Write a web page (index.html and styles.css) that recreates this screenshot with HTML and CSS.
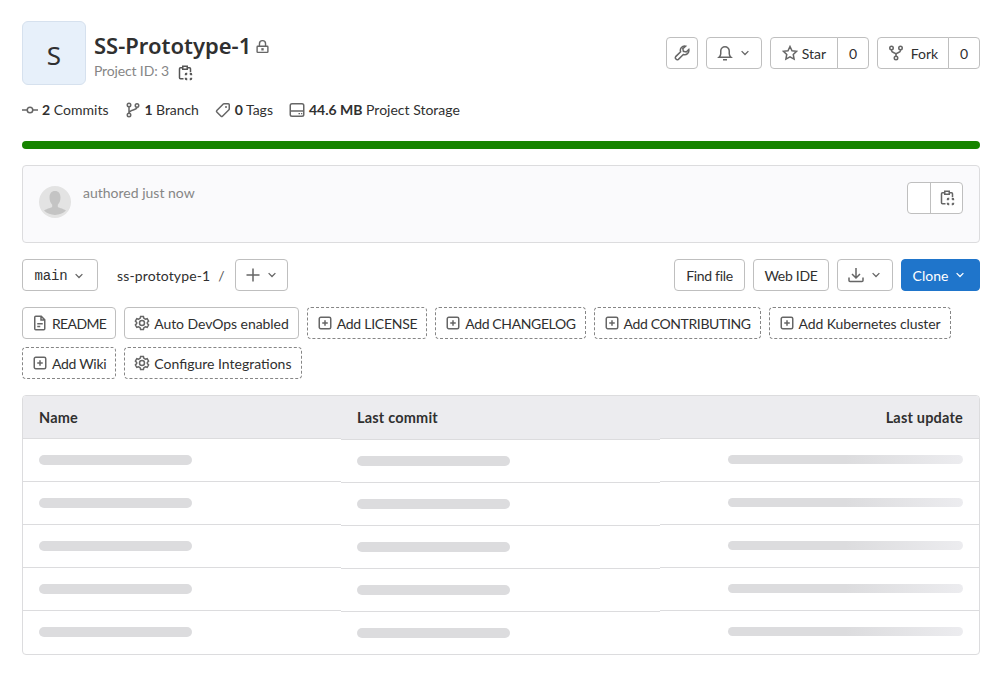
FILE: index.html
```html
<!DOCTYPE html>
<html lang="en">
<head>
<meta charset="utf-8">
<title>SS-Prototype-1</title>
<link rel="stylesheet" href="styles.css">
</head>
<body>
<svg class="defs" width="0" height="0" aria-hidden="true">
  <symbol id="i-lock" viewBox="0 0 16 16"><path d="M3 7.75h10a.75.75 0 0 1 .75.75v5a.75.75 0 0 1-.75.75H3a.75.75 0 0 1-.75-.75v-5A.75.75 0 0 1 3 7.75zM4.75 7.5V5a3.25 3.25 0 0 1 6.5 0v2.5"/><path class="f" d="M6.75 9.75h2.5v2.5h-2.5z"/></symbol>
  <symbol id="i-copy" viewBox="0 0 16 16"><path d="M5.500 2.750H3.500a1 1 0 0 0-1 1v9a1 1 0 0 0 1 1h3M10.500 2.750h2a1 1 0 0 1 1 1V7M5.750 1.250h4.500v3h-4.500z"/><path class="thick" d="M8.750 10.250v-1a.5.5 0 0 1 .5-.5h1M12.750 8.750h1a.5.5 0 0 1 .5.5v1M14.250 12.750v1a.5.5 0 0 1-.5.5h-1M10.250 14.250h-1a.5.5 0 0 1-.5-.5v-1"/></symbol>
  <symbol id="i-commit" viewBox="0 0 16 16"><circle cx="8" cy="8" r="2.75"/><path d="M0 8h5.25M10.75 8H16"/></symbol>
  <symbol id="i-branch" viewBox="0 0 16 16"><circle cx="4" cy="3" r="1.75"/><circle cx="4" cy="13" r="1.75"/><circle cx="12" cy="3.5" r="1.75"/><path d="M4 4.75v6.5M12 5.25c0 3.5-8 2-8 6"/></symbol>
  <symbol id="i-tag" viewBox="0 0 16 16"><path d="M9 1.75h4.25a1 1 0 0 1 1 1V7a1 1 0 0 1-.3.7l-6.5 6.5a1 1 0 0 1-1.4 0L1.8 9.95a1 1 0 0 1 0-1.4l6.5-6.5A1 1 0 0 1 9 1.75z"/><circle class="f" cx="11" cy="5" r="1"/></symbol>
  <symbol id="i-storage" viewBox="0 0 16 16"><rect x="1.25" y="1.75" width="13.5" height="12.5" rx="1.75"/><path d="M1.25 9h13.5"/><path class="f" d="M9.5 11h1.5v1.25H9.5zM12 11h1.25v1.25H12z"/></symbol>
  <symbol id="i-wrench" viewBox="0 0 16 16"><path d="M11.6 1.2a4.3 4.3 0 0 0-5 5.6L1.7 11.600a1.950 1.950 0 0 0 2.700 2.700l4.900-4.800a4.300 4.300 0 0 0 5.500-5L12.200 7 9.400 6.300 8.800 3.600z"/></symbol>
  <symbol id="i-bell" viewBox="0 0 16 16"><path d="M2 12.250h12c-1-.9-1.750-2-1.750-3.500V6a4.250 4.250 0 0 0-8.500 0v2.750c0 1.500-.75 2.600-1.750 3.500zM6 14.750h4"/></symbol>
  <symbol id="i-chev" viewBox="0 0 16 16"><path d="M3.500 5.500L8 10l4.500-4.500"/></symbol>
  <symbol id="i-star" viewBox="0 0 16 16"><path d="M8 1.500l2 4.200 4.600.6-3.350 3.200.850 4.600L8 11.900l-4.100 2.200.850-4.600L1.400 6.300 6 5.700z"/></symbol>
  <symbol id="i-fork" viewBox="0 0 16 16"><circle cx="3.500" cy="3" r="1.750"/><circle cx="12.500" cy="3" r="1.750"/><circle cx="8" cy="13" r="1.750"/><path d="M3.500 4.750v.75c0 2.500 4.500 2 4.500 4v1.750M12.500 4.750v.75c0 2.500-4.500 2-4.500 4"/></symbol>
  <symbol id="i-plus" viewBox="0 0 16 16"><path d="M8 1.500v13M1.500 8h13"/></symbol>
  <symbol id="i-download" viewBox="0 0 16 16"><path d="M8 1v9.500M4 7l4 4 4-4M1 10.500v3a1 1 0 0 0 1 1h12a1 1 0 0 0 1-1v-3"/></symbol>
  <symbol id="i-doc" viewBox="0 0 16 16"><path d="M3.750 1.250h5.500l3.500 3.500v9a1 1 0 0 1-1 1h-8a1 1 0 0 1-1-1v-11.500a1 1 0 0 1 1-1zM9 1.500v3.500h3.500M5.250 8.750h5.500M5.250 11.500h3"/></symbol>
  <symbol id="i-gear" viewBox="0 0 16 16"><path d="M6.600 1.500h2.800l.5 1.800 1.500.9 1.800-.5 1.400 2.400-1.300 1.400v1l1.300 1.400-1.400 2.400-1.800-.5-1.500.9-.5 1.800H6.600l-.5-1.800-1.500-.9-1.800.5-1.400-2.400 1.300-1.400v-1L1.400 6.100l1.400-2.400 1.800.5 1.500-.9z"/><circle cx="8" cy="8" r="2.500"/></symbol>
  <symbol id="i-addbox" viewBox="0 0 16 16"><rect x="2.250" y="2.250" width="11.500" height="11.500" rx="1.500"/><path d="M8 5.250v5.500M5.250 8h5.500"/></symbol>
</svg>

<main class="page">
  <header class="project">
    <div class="project-id">
      <div class="avatar">S</div>
      <div class="project-text">
        <h1 class="title">SS-Prototype-1<svg class="icon lock"><use href="#i-lock"/></svg></h1>
        <div class="sub">Project ID: 3<svg class="icon copy-sm"><use href="#i-copy"/></svg></div>
      </div>
    </div>
    <div class="project-actions">
      <button class="btn icon-btn"><svg class="icon"><use href="#i-wrench"/></svg></button>
      <button class="btn bell-btn"><svg class="icon"><use href="#i-bell"/></svg><svg class="icon chev"><use href="#i-chev"/></svg></button>
      <div class="split">
        <button class="btn seg star"><svg class="icon"><use href="#i-star"/></svg>Star</button>
        <span class="btn seg count">0</span>
      </div>
      <div class="split">
        <button class="btn seg fork"><svg class="icon"><use href="#i-fork"/></svg>Fork</button>
        <span class="btn seg count">0</span>
      </div>
    </div>
  </header>

  <nav class="stats">
    <span class="stat s-commits"><svg class="icon"><use href="#i-commit"/></svg><span><b>2</b> Commits</span></span>
    <span class="stat s-branch"><svg class="icon"><use href="#i-branch"/></svg><span><b>1</b> Branch</span></span>
    <span class="stat"><svg class="icon"><use href="#i-tag"/></svg><span><b>0</b> Tags</span></span>
    <span class="stat"><svg class="icon"><use href="#i-storage"/></svg><span><b>44.6 MB</b> Project Storage</span></span>
  </nav>

  <div class="progress"></div>

  <section class="commit">
    <div class="commit-left">
      <svg class="face" viewBox="0 0 32 32"><circle cx="16" cy="16" r="16" fill="#e3e3e3"/><path d="M16 5c3.600 0 5.500 2.600 5.500 6.500 0 3-1.100 5.700-2.700 7.200v2.100c0 1 5 1.600 8.200 3.700a16 16 0 0 1-22 0c3.200-2.100 8.200-2.700 8.200-3.700v-2.100c-1.600-1.500-2.700-4.200-2.700-7.200C10.500 7.600 12.400 5 16 5z" fill="#c4c4c4"/></svg>
      <span class="authored">authored just now</span>
    </div>
    <div class="sha">
      <span class="sha-a"></span>
      <span class="sha-b"><svg class="icon"><use href="#i-copy"/></svg></span>
    </div>
  </section>

  <div class="toolbar">
    <div class="toolbar-group">
      <button class="btn ref">main<svg class="icon chev"><use href="#i-chev"/></svg></button>
      <span class="path">ss-prototype-1</span>
      <span class="slash">/</span>
      <button class="btn add"><svg class="icon"><use href="#i-plus"/></svg><svg class="icon chev"><use href="#i-chev"/></svg></button>
    </div>
    <div class="toolbar-group">
      <button class="btn txt find">Find file</button>
      <button class="btn txt ide">Web IDE</button>
      <button class="btn dl"><svg class="icon"><use href="#i-download"/></svg><svg class="icon chev"><use href="#i-chev"/></svg></button>
      <button class="btn clone">Clone<svg class="icon chev"><use href="#i-chev"/></svg></button>
    </div>
  </div>

  <div class="shortcuts">
    <a class="pill caps-l"><svg class="icon"><use href="#i-doc"/></svg>README</a>
    <a class="pill auto"><svg class="icon"><use href="#i-gear"/></svg>Auto DevOps enabled</a>
    <a class="pill dashed caps-s"><svg class="icon"><use href="#i-addbox"/></svg>Add LICENSE</a>
    <a class="pill dashed caps-m"><svg class="icon"><use href="#i-addbox"/></svg>Add CHANGELOG</a>
    <a class="pill dashed caps-m"><svg class="icon"><use href="#i-addbox"/></svg>Add CONTRIBUTING</a>
    <a class="pill dashed kube"><svg class="icon"><use href="#i-addbox"/></svg>Add Kubernetes cluster</a>
    <a class="pill dashed wiki"><svg class="icon"><use href="#i-addbox"/></svg>Add Wiki</a>
    <a class="pill dashed"><svg class="icon"><use href="#i-gear"/></svg>Configure Integrations</a>
  </div>

  <section class="tree">
    <div class="col">
      <div class="head">Name</div>
      <div class="cell"><i class="bar"></i></div>
      <div class="cell"><i class="bar"></i></div>
      <div class="cell"><i class="bar"></i></div>
      <div class="cell"><i class="bar"></i></div>
      <div class="cell"><i class="bar"></i></div>
    </div>
    <div class="col mid">
      <div class="head">Last commit</div>
      <div class="cell"><i class="bar"></i></div>
      <div class="cell"><i class="bar"></i></div>
      <div class="cell"><i class="bar"></i></div>
      <div class="cell"><i class="bar"></i></div>
      <div class="cell"><i class="bar"></i></div>
    </div>
    <div class="col end">
      <div class="head">Last update</div>
      <div class="cell"><i class="bar"></i></div>
      <div class="cell"><i class="bar"></i></div>
      <div class="cell"><i class="bar"></i></div>
      <div class="cell"><i class="bar"></i></div>
      <div class="cell"><i class="bar"></i></div>
    </div>
  </section>
</main>
</body>
</html>
```

FILE: styles.css
```css
* { box-sizing: border-box; }
html, body { margin: 0; padding: 0; background: #fff; }
body { font-family: Lato, "Noto Sans", sans-serif; font-size: 14px; color: #303030; overflow: hidden; }
.defs { position: absolute; }
.icon { width: 16px; height: 16px; flex: none; fill: none; stroke: #666; stroke-width: 1.5; }
.f { fill: #666; stroke: none; }
.thick { stroke-width: 1.9; }
.page { padding: 21px 18px 0 22px; height: 673px; }

.project { display: flex; justify-content: space-between; align-items: flex-start; }
.project-id { display: flex; gap: 8px; }
.avatar { width: 64px; height: 64px; border-radius: 6px; background: #e7f0fa; border: 1px solid #d6e1ee; display: flex; align-items: center; justify-content: center; font-family: "Noto Sans", sans-serif; font-size: 26px; color: #303030; padding-top: 3px; }
.project-text { padding-top: 9px; }
.title { margin: 0; font-family: "Noto Sans", sans-serif; font-size: 22px; line-height: 30px; font-weight: 600; color: #303030; display: flex; align-items: center; gap: 4px; }
.lock { width: 15px; height: 15px; margin-top: 3px; }
.sub { display: flex; align-items: center; color: #868686; line-height: 20px; margin-top: 1px; letter-spacing: -.15px; }
.copy-sm { margin-left: 8px; margin-top: 3px; stroke: #555; }
.project-actions { display: flex; gap: 8px; padding-top: 16px; }

.btn { height: 32px; background: #fff; border: 1px solid #bfbfbf; border-radius: 4px; font: inherit; color: #303030; display: inline-flex; align-items: center; justify-content: center; padding: 0; }
.icon-btn { width: 32px; }
.bell-btn { width: 56px; gap: 6px; }
.chev { width: 12px; height: 12px; stroke-width: 1.7; }
.split { display: flex; }
.seg.star { width: 68px; border-radius: 4px 0 0 4px; gap: 4px; }
.seg.fork { width: 72px; border-radius: 4px 0 0 4px; gap: 7px; }
.seg.count { width: 32px; margin-left: -1px; border-radius: 0 4px 4px 0; }

.stats { display: flex; gap: 16px; margin-top: 15px; line-height: 20px; }
.stat { display: flex; align-items: center; gap: 4px; }
.stat b { font-weight: 700; }
.s-commits { letter-spacing: .03px; }
.s-branch { letter-spacing: -.1px; }

.progress { height: 8px; margin-top: 21px; background: #168400; border-radius: 4px; }

.commit { height: 78px; margin-top: 16px; background: #fafafc; border: 1px solid #dcdcde; border-radius: 4px; display: flex; justify-content: space-between; padding: 16px; }
.commit-left { display: flex; gap: 12px; }
.face { width: 32px; height: 32px; margin-top: 4px; }
.authored { color: #868686; line-height: 22px; }
.sha { display: flex; height: 32px; border: 1px solid #bfbfbf; border-radius: 4px; background: #fff; }
.sha-a { width: 23px; border-right: 1px solid #bfbfbf; }
.sha-b { width: 31px; display: flex; align-items: center; justify-content: center; }

.toolbar { display: flex; justify-content: space-between; margin-top: 16px; }
.toolbar-group { display: flex; align-items: center; gap: 8px; }
.ref { width: 76px; font-family: "Liberation Mono", monospace; font-size: 14px; letter-spacing: -.2px; gap: 6px; padding-top: 1px; }
.path { margin-left: 11px; letter-spacing: .14px; }
.slash { color: #555; margin-right: 2px; }
.add { width: 53px; gap: 5px; }
.txt { letter-spacing: -.3px; }
.find { width: 71px; }
.ide { width: 76px; }
.dl { width: 56px; gap: 6px; }
.clone { width: 79px; gap: 6px; background: #1f75cb; border-color: #1f75cb; color: #fff; padding-right: 2px; }
.clone .icon { stroke: #fff; }

.shortcuts { display: flex; flex-wrap: wrap; gap: 8px; margin-top: 16px; }
.pill { height: 32px; border: 1px solid #bfbfbf; border-radius: 4px; padding: 0 9px; display: inline-flex; align-items: center; gap: 4px; }
.pill.dashed { border: 1px dashed #868686; }
.caps-l { letter-spacing: -.65px; }
.caps-m { letter-spacing: -.38px; }
.caps-s { letter-spacing: -.27px; }
.auto { letter-spacing: -.06px; }
.kube { letter-spacing: -.1px; }
.wiki { letter-spacing: -.3px; }

.tree { display: grid; grid-template-columns: 318px 319px 1fr; margin-top: 16px; height: 260px; border: 1px solid #dcdcde; border-radius: 4px; overflow: hidden; }
.head { height: 43px; background: #ececef; border-bottom: 1px solid #dcdcde; font-weight: 700; font-size: 14.500px; letter-spacing: .2px; display: flex; align-items: center; padding: 1px 16px 0; }
.mid .head { height: 44px; padding: 1px 16px 1px; }
.cell { height: 43px; border-bottom: 1px solid #dcdcde; padding: 16px 16px 0; }
.col .cell:last-child { border-bottom: 0; }
.bar { display: block; width: 153px; height: 10px; border-radius: 5px; background: #dcdcde; }
.end .head { justify-content: flex-end; }
.end .bar { width: 235px; height: 9px; margin-left: auto; background: linear-gradient(90deg, #dcdcde 0%, #dcdcde 50%, #ececef 100%); }
```
